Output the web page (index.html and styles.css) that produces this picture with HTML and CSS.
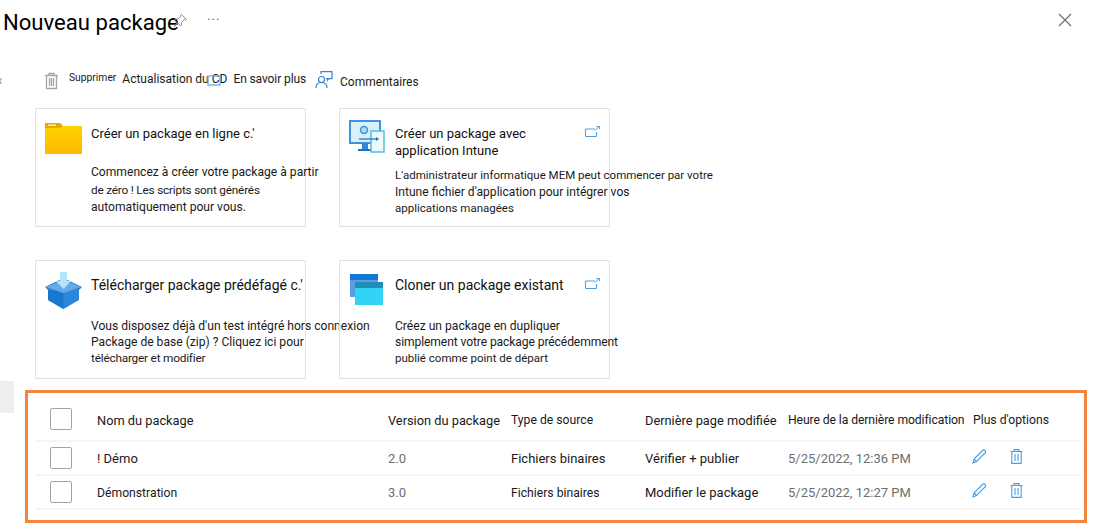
FILE: index.html
```html
<!DOCTYPE html>
<html lang="fr">
<head>
    <meta charset="UTF-8">
    <title>Nouveau package</title>
    <link rel="stylesheet" href="styles.css">
</head>
<body>
    <div class="side-tab"></div>
    <header class="title-bar">
        <h1>Nouveau package</h1>
        <svg class="pin" width="16" height="16" viewBox="0 0 16 16" fill="none" stroke="#8a8a8a"><path d="M9.500 1.500l5 5-1.200.6-1-.4-2.800 2.800.2 2.400-1 1-2.600-2.700L2 13.900l3.200-4.200L2.600 7l1-1 2.400.2 2.800-2.800-.4-1z"/></svg>
        <span class="dots">···</span>
        <svg class="close" width="14" height="14" viewBox="0 0 14 14" stroke="#6a6a6a" stroke-width="1.100"><path d="M1 1l12 12M13 1L1 13"/></svg>
    </header>

    <nav class="toolbar">
        <span class="chevron">‹</span>
        <svg class="tool-trash" width="15" height="18" viewBox="0 0 15 18" fill="none" stroke="#a6a6a6" stroke-width="1.300"><path d="M1 3.500h13M5 3.500V1.500h5v2M2.500 3.500v13h10v-13M5.500 6v8M7.500 6v8M9.500 6v8"/></svg>
        <span class="tool-delete">Supprimer</span>
        <span class="tool-refresh">Actualisation du CD
            <svg class="cd-icon" width="14" height="11" viewBox="0 0 14 11" fill="none" stroke="#69a9e6" stroke-width="1.300"><rect x="1" y="1" width="12" height="9"/></svg>
        </span>
        <span class="tool-learn">En savoir plus</span>
        <svg class="tool-feedback" width="18" height="18" viewBox="0 0 18 18" fill="none" stroke="#2f86d6" stroke-width="1.200"><path d="M6 3V.7h11v7h-3l-1.500 1.500V7.700H11"/><circle cx="6.500" cy="8.500" r="3"/><path d="M1 17c0-3.500 2.200-5.500 5.500-5.500S12 13.500 12 17"/></svg>
        <span class="tool-comments">Commentaires</span>
    </nav>

    <section class="cards">
        <article class="card">
            <div class="card-head">
                <svg class="card-icon" width="37" height="37" viewBox="0 0 37 37">
                    <defs><linearGradient id="folderFill" x1="0" y1="0" x2="0" y2="1"><stop offset="0" stop-color="#ffd500"/><stop offset="1" stop-color="#fdb900"/></linearGradient></defs>
                    <path d="M0 3h15l3 3h19v28H0z" fill="url(#folderFill)"/>
                    <path d="M0 3h15l3 3-3 2H0z" fill="#e8a800"/>
                    <rect x="3" y="4.500" width="8" height="1.500" fill="#fff0b0"/>
                </svg>
                <h2>Créer un package en ligne c.'</h2>
            </div>
            <p class="card-desc">
                <span class="line">Commencez à créer votre package à partir</span>
                <span class="line line-narrow">de zéro ! Les scripts sont générés</span>
                <span class="line">automatiquement pour vous.</span>
            </p>
        </article>

        <article class="card">
            <div class="card-head">
                <svg class="card-icon" width="37" height="37" viewBox="0 0 37 37">
                    <path d="M1 1h30v22H1z" fill="#d9effb" stroke="#3c95dc" stroke-width="2"/>
                    <path d="M9 29h14v2H9z" fill="#1a6fbe"/><path d="M13 23h6v6h-6z" fill="#2f86d6"/>
                    <circle cx="15" cy="10" r="3.500" fill="#a8dcf2" stroke="#3c95dc" stroke-width="1.500"/>
                    <path d="M22 11h13v21H22z" fill="#ecf8fd" stroke="#50c0e0" stroke-width="1.500"/>
                    <path d="M10 19h18" stroke="#1a6fbe" stroke-width="1.200"/><path d="M27 17l3 2-3 2z" fill="#1a6fbe"/>
                </svg>
                <h2>Créer un package avec<br>application Intune</h2>
                <svg class="open-icon" width="15" height="11" viewBox="0 0 15 11" fill="none" stroke="#4b9fe0"><path d="M10 3H.5v7.500h11V6"/><path d="M10 4.500L14 .5M11.500.5H14.500V3"/></svg>
            </div>
            <p class="card-desc card-desc-low">
                <span class="line line-mid">L'administrateur informatique MEM peut commencer par votre</span>
                <span class="line">Intune fichier d'application pour intégrer vos</span>
                <span class="line line-mid">applications managées</span>
            </p>
        </article>

        <article class="card">
            <div class="card-head">
                <svg class="card-icon" width="37" height="37" viewBox="0 0 37 37">
                    <path d="M18.500 6L37 15l-3 3v10L18.500 37 3 28V18l-3-3z" fill="#2b88d8"/>
                    <path d="M18.500 19L3 18v10l15.500 9z" fill="#1a78cc"/>
                    <path d="M18.500 8L36 15l-17.500 6L1 15z" fill="#66a8ea"/>
                    <path d="M15 0h7v9h4l-7.500 8L11 9h4z" fill="#b6e3f7"/>
                </svg>
                <h2 class="title-large">Télécharger package prédéfagé c.'</h2>
            </div>
            <p class="card-desc card-desc-mid">
                <span class="line">Vous disposez déjà d'un test intégré hors connexion</span>
                <span class="line">Package de base (zip) ? Cliquez ici pour</span>
                <span class="line line-narrow">télécharger et modifier</span>
            </p>
        </article>

        <article class="card">
            <div class="card-head">
                <svg class="card-icon" width="37" height="37" viewBox="0 0 37 37">
                    <path d="M1 2h28v23H1z" fill="#5b9ce8"/><path d="M1 2h28v6H1z" fill="#0f78d4"/>
                    <path d="M6 10h28v23H6z" fill="#32d4f5"/><path d="M6 10h28v6H6z" fill="#1f8fb8"/>
                </svg>
                <h2 class="title-large">Cloner un package existant</h2>
                <svg class="open-icon" width="15" height="11" viewBox="0 0 15 11" fill="none" stroke="#4b9fe0"><path d="M10 3H.5v7.500h11V6"/><path d="M10 4.500L14 .5M11.500.5H14.500V3"/></svg>
            </div>
            <p class="card-desc card-desc-mid">
                <span class="line">Créez un package en dupliquer</span>
                <span class="line line-tight">simplement votre package précédemment</span>
                <span class="line line-mid">publié comme point de départ</span>
            </p>
        </article>
    </section>

    <section class="package-box">
        <div class="row row-head">
            <span class="check"></span>
            <span>Nom du package</span>
            <span>Version du package</span>
            <span class="cell-small">Type de source</span>
            <span>Dernière page modifiée</span>
            <span class="cell-small cell-tight">Heure de la dernière modification</span>
            <span class="cell-small">Plus d'options</span>
        </div>
        <div class="row">
            <span class="check"></span>
            <span>! Démo</span>
            <span class="muted">2.0</span>
            <span>Fichiers binaires</span>
            <span>Vérifier + publier</span>
            <span class="muted">5/25/2022, 12:36 PM</span>
            <span class="actions">
                <svg width="14" height="15" viewBox="0 0 14 15" fill="none" stroke="#4b9fe0" stroke-width="1.100"><path d="M1 14l1-4 8.500-8.500a1.400 1.400 0 0 1 2.500 2.500L4.500 12.500zM2 10l2.500 2.500"/></svg>
                <svg width="13" height="15" viewBox="0 0 13 15" fill="none" stroke="#4b9fe0" stroke-width="1.100"><path d="M.5 2.500h12M4 2.500V.6h5v1.900M1.800 2.500v11.900h9.400V2.500M5 5v7M8 5v7"/></svg>
            </span>
        </div>
        <div class="row">
            <span class="check"></span>
            <span class="cell-small">Démonstration</span>
            <span class="muted">3.0</span>
            <span class="cell-small">Fichiers binaires</span>
            <span>Modifier le package</span>
            <span class="muted">5/25/2022, 12:27 PM</span>
            <span class="actions">
                <svg width="14" height="15" viewBox="0 0 14 15" fill="none" stroke="#4b9fe0" stroke-width="1.100"><path d="M1 14l1-4 8.500-8.500a1.400 1.400 0 0 1 2.500 2.500L4.500 12.500zM2 10l2.500 2.500"/></svg>
                <svg width="13" height="15" viewBox="0 0 13 15" fill="none" stroke="#4b9fe0" stroke-width="1.100"><path d="M.5 2.500h12M4 2.500V.6h5v1.900M1.800 2.500v11.900h9.400V2.500M5 5v7M8 5v7"/></svg>
            </span>
        </div>
    </section>
</body>
</html>
```

FILE: styles.css
```css
html, body {
    margin: 0;
    padding: 0;
    height: 530px;
    overflow: hidden;
}
body {
    position: relative;
    font-family: 'Roboto', 'Liberation Sans', sans-serif;
    font-size: 12px;
    color: #1a1a1a;
    background: #fff;
}
.side-tab {
    position: absolute;
    left: 0;
    top: 381px;
    width: 14px;
    height: 32px;
    background: #eeeeee;
}

.title-bar {
    display: flex;
    align-items: center;
    height: 44px;
    padding-left: 3px;
}
.title-bar h1 {
    margin: 0;
    font-size: 22.100px;
    font-weight: 400;
    color: #000;
    white-space: nowrap;
}
.pin {
    margin-left: -7px;
    margin-top: -3px;
}
.dots {
    margin-left: 19px;
    margin-top: -4px;
    width: 14px;
    font-size: 15px;
    letter-spacing: 0.5px;
    color: #777;
}
.close {
    margin-left: auto;
    margin-right: 28px;
    margin-top: -4px;
}

.toolbar {
    display: flex;
    align-items: center;
    height: 20px;
    margin-top: 26px;
    white-space: nowrap;
}
.chevron {
    width: 44px;
    margin-left: -2px;
    margin-right: 2px;
    color: #888;
    font-size: 14px;
}
.tool-trash {
    margin-top: 1px;
}
.tool-delete {
    margin-left: 10px;
    margin-top: -5px;
    font-size: 10.300px;
}
.tool-refresh {
    position: relative;
    margin-left: 6px;
    margin-top: -2px;
}
.cd-icon {
    position: absolute;
    left: 85px;
    top: 3px;
}
.tool-learn {
    margin-left: 6px;
    margin-top: -2px;
    letter-spacing: -0.1px;
}
.tool-feedback {
    margin-left: 9px;
    margin-top: -1px;
}
.tool-comments {
    margin-left: 7px;
    margin-top: 4px;
}

.cards {
    display: grid;
    grid-template-columns: 271px 271px;
    grid-auto-rows: 119px;
    column-gap: 33px;
    row-gap: 33px;
    margin: 18px 0 0 35px;
}
.card {
    border: 1px solid #e1e1e1;
    padding: 11px 9px 0;
    white-space: nowrap;
}
.card-head {
    display: flex;
    align-items: flex-start;
    height: 44px;
}
.card-icon {
    flex: none;
    margin-right: 9px;
}
.card-head h2 {
    margin: 5px 0 0;
    font-size: 13px;
    font-weight: 400;
    line-height: 17px;
    color: #111;
}
.card-head .title-large {
    font-size: 14px;
}
.open-icon {
    margin-left: auto;
    margin-top: 6px;
}
.card-desc {
    margin: 0 0 0 46px;
    line-height: 17.500px;
    color: #1a1a1a;
}
.card-desc-low {
    margin-top: 3px;
    line-height: 16.500px;
}
.card-desc-mid {
    margin-top: 2px;
    line-height: 16px;
}
.line {
    display: block;
    font-size: 12.100px;
}
.line-narrow {
    font-size: 11.800px;
    letter-spacing: -0.2px;
}
.line-mid {
    font-size: 11.500px;
}
.line-tight {
    letter-spacing: -0.1px;
}

.package-box {
    box-sizing: border-box;
    width: 1062px;
    height: 133px;
    margin: 11px 0 0 25px;
    padding: 4px 3px 0 8px;
    border: 3px solid #f5843c;
}
.row {
    display: grid;
    grid-template-columns: 61px 291px 123px 134px 143px 185px 1fr;
    align-items: center;
    height: 32px;
    border-bottom: 2px solid #f5f5f5;
    font-size: 13px;
    color: #1a1a1a;
    white-space: nowrap;
}
.row > span {
    padding-top: 1px;
}
.row-head {
    height: 43px;
    font-size: 12.800px;
}
.row-head > span {
    padding-top: 3px;
}
.cell-small {
    font-size: 12.200px;
}
.cell-tight {
    letter-spacing: -0.1px;
}
.check {
    box-sizing: border-box;
    width: 22px;
    height: 22px;
    margin-left: 14px;
    border: 1px solid #a3a3a3;
    border-radius: 2px;
    background: #fff;
}
.muted {
    color: #6e6e6e;
}
.actions {
    display: flex;
    gap: 24px;
    margin-left: -1px;
    padding-bottom: 4px;
}
```
